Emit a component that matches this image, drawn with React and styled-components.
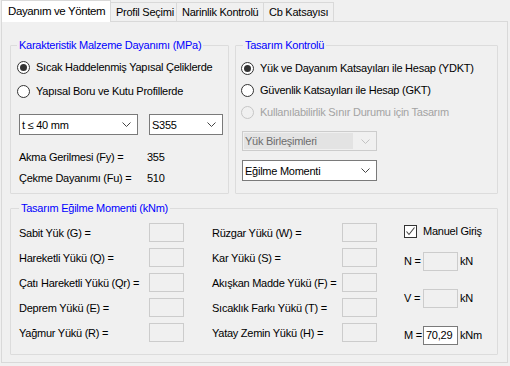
import React from 'react';
import styled, { createGlobalStyle } from 'styled-components';

const GlobalStyle = createGlobalStyle`
  html, body {
    margin: 0;
    padding: 0;
    background: #f0f0f0;
  }
  body {
    font-family: "Liberation Sans", Arial, sans-serif;
    font-size: 11px;
    letter-spacing: -0.25px;
    color: #000;
  }
`;

const Window = styled.div`
  width: 510px;
  height: 366px;
  display: flex;
  flex-direction: column;
  overflow: hidden;
  background: #f0f0f0;
`;

const TabStrip = styled.div`
  display: flex;
  align-items: flex-end;
  height: 22px;
  margin-bottom: -1px;
  padding-left: 1px;
  position: relative;
  z-index: 1;
`;

const Tab = styled.div`
  box-sizing: border-box;
  width: ${p => p.$width}px;
  height: ${p => (p.$active ? 22 : 20)}px;
  margin-left: ${p => (p.$first ? 0 : -1)}px;
  border: 1px solid #d9d9d9;
  border-bottom: ${p => (p.$active ? 'none' : '1px solid #d9d9d9')};
  background: ${p => (p.$active ? '#ffffff' : '#f0f0f0')};
  display: flex;
  align-items: center;
  padding-left: ${p => (p.$active ? 6 : 5)}px;
  padding-bottom: ${p => (p.$active ? 1 : 0)}px;
  font-size: ${p => (p.$active ? 11.5 : 11)}px;
  letter-spacing: ${p => (p.$active ? -0.4 : -0.25)}px;
  white-space: nowrap;
  position: relative;
  z-index: ${p => (p.$active ? 2 : 0)};
`;

const Panel = styled.div`
  box-sizing: border-box;
  width: 507px;
  height: 342px;
  margin-left: 1px;
  border: 1px solid #d9d9d9;
  background: #f0f0f0;
  padding: 16px 0 0 8px;
  display: grid;
  grid-template-columns: 219px 263px;
  grid-template-rows: 156px 154px;
  column-gap: 6px;
  row-gap: 7px;
`;

const Group = styled.fieldset`
  box-sizing: border-box;
  margin: 0;
  min-width: 0;
  border: 1px solid #dcdcdc;
  border-radius: 1px;
  padding: ${p => p.$pad};
  grid-column: ${p => p.$span || 'auto'};
  display: flex;
  flex-direction: ${p => p.$dir || 'column'};
`;

const Legend = styled.legend`
  color: #0000ff;
  font-size: 11px;
  line-height: 14px;
  padding: 0 2px;
  margin-left: ${p => p.$offset || 0}px;
`;

const RadioRow = styled.label`
  display: flex;
  align-items: center;
  gap: 6px;
  height: ${p => p.$h}px;
  color: ${p => (p.$disabled ? '#a3a3a3' : '#000')};
  white-space: nowrap;
`;

const RadioDot = styled.span`
  box-sizing: border-box;
  width: 13px;
  height: 13px;
  border-radius: 50%;
  border: 1px solid ${p => (p.$disabled ? '#c6c6c6' : '#333')};
  background: ${p => (p.$disabled ? '#f0f0f0' : '#fff')};
  display: flex;
  align-items: center;
  justify-content: center;
  flex: none;
  &::after {
    content: '';
    display: ${p => (p.$checked ? 'block' : 'none')};
    width: 7px;
    height: 7px;
    border-radius: 50%;
    background: #333;
  }
`;

const Radio = ({ checked, disabled, h, children }) => (
  <RadioRow $h={h} $disabled={disabled}>
    <RadioDot $checked={checked} $disabled={disabled} />
    {children}
  </RadioRow>
);

const ComboBox = styled.div`
  box-sizing: border-box;
  width: ${p => p.$w}px;
  height: ${p => p.$h}px;
  border: 1px solid ${p => (p.$disabled ? '#cccccc' : '#7a7a7a')};
  background: ${p => (p.$disabled ? '#f0f0f0' : '#fff')};
  display: flex;
  align-items: center;
  padding: 1px 6px 1px 1px;
  color: ${p => (p.$disabled ? '#6d6d6d' : '#000')};
  flex: none;
`;

const ComboText = styled.span`
  flex: 1;
  align-self: stretch;
  display: flex;
  align-items: center;
  padding-left: 1px;
  margin-right: 8px;
  background: ${p => (p.$disabled ? '#e3e3e3' : 'transparent')};
  white-space: nowrap;
`;

const Chevron = ({ color }) => (
  <svg width="9" height="5" viewBox="0 0 9 5">
    <polyline points="0.5,0.5 4.5,4.5 8.5,0.5" fill="none" stroke={color} strokeWidth="1" />
  </svg>
);

const Combo = ({ w, h, disabled, children }) => (
  <ComboBox $w={w} $h={h} $disabled={disabled}>
    <ComboText $disabled={disabled}>{children}</ComboText>
    <Chevron color={disabled ? '#c2c2c2' : '#444'} />
  </ComboBox>
);

const ComboRow = styled.div`
  display: flex;
  gap: ${p => p.$gap || 0}px;
  margin-top: ${p => p.$mt}px;
  margin-left: ${p => p.$ml || 0}px;
`;

const ValueRow = styled.div`
  display: flex;
  align-items: center;
  height: 21px;
  margin-left: 2px;
  margin-top: ${p => p.$mt || 0}px;
`;

const ValueLabel = styled.span`
  width: 128px;
  white-space: nowrap;
`;

const Column = styled.div`
  display: flex;
  flex-direction: column;
  margin-right: ${p => p.$mr || 0}px;
`;

const LoadRow = styled.div`
  display: flex;
  align-items: center;
  height: 25px;
`;

const LoadLabel = styled.span`
  width: 130px;
  white-space: nowrap;
`;

const TextBox = styled.div`
  box-sizing: border-box;
  width: 35px;
  height: ${p => p.$h || 19}px;
  border: 1px solid ${p => (p.$active ? '#7a7a7a' : '#cccccc')};
  background: ${p => (p.$active ? '#fff' : '#f0f0f0')};
  display: flex;
  align-items: center;
  padding-left: 2px;
  flex: none;
`;

const CheckRow = styled.label`
  display: flex;
  align-items: center;
  gap: 6px;
  height: 22px;
`;

const CheckBox = styled.span`
  box-sizing: border-box;
  width: 13px;
  height: 13px;
  border: 1px solid #333;
  background: #fff;
  display: flex;
  align-items: center;
  justify-content: center;
  flex: none;
`;

const ForceRow = styled.div`
  display: flex;
  align-items: center;
  height: 20px;
  margin-top: ${p => p.$mt}px;
`;

const ForceLabel = styled.span`
  width: 19px;
  white-space: nowrap;
`;

const Unit = styled.span`
  margin-left: 2px;
`;

const loadsLeft = [
  'Sabit Yük (G) =',
  'Hareketli Yükü (Q) =',
  'Çatı Hareketli Yükü (Qr) =',
  'Deprem Yükü (E) =',
  'Yağmur Yükü (R) =',
];

const loadsRight = [
  'Rüzgar Yükü (W) =',
  'Kar Yükü (S) =',
  'Akışkan Madde Yükü (F) =',
  'Sıcaklık Farkı Yükü (T) =',
  'Yatay Zemin Yükü (H) =',
];

const tabs = [
  { name: 'Dayanım ve Yöntem', width: 110 },
  { name: 'Profil Seçimi', width: 67 },
  { name: 'Narinlik Kontrolü', width: 88 },
  { name: 'Cb Katsayısı', width: 71 },
];

export default function App() {
  return (
    <Window>
      <GlobalStyle />
      <TabStrip>
        {tabs.map((t, i) => (
          <Tab key={t.name} $width={t.width} $active={i === 0} $first={i === 0}>
            {t.name}
          </Tab>
        ))}
      </TabStrip>
      <Panel>
        <Group $pad="3px 6px 0 6px">
          <Legend>Karakteristik Malzeme Dayanımı (MPa)</Legend>
          <Radio h={24} checked>Sıcak Haddelenmiş Yapısal Çeliklerde</Radio>
          <Radio h={24}>Yapısal Boru ve Kutu Profillerde</Radio>
          <ComboRow $mt={11} $ml={2} $gap={11}>
            <Combo w={119} h={21}>t ≤ 40 mm</Combo>
            <Combo w={74} h={21}>S355</Combo>
          </ComboRow>
          <ValueRow $mt={11}>
            <ValueLabel>Akma Gerilmesi (Fy) =</ValueLabel>
            <span>355</span>
          </ValueRow>
          <ValueRow>
            <ValueLabel>Çekme Dayanımı (Fu) =</ValueLabel>
            <span>510</span>
          </ValueRow>
        </Group>

        <Group $pad="5px 5px 0 5px">
          <Legend $offset={2}>Tasarım Kontrolü</Legend>
          <Radio h={22} checked>Yük ve Dayanım Katsayıları ile Hesap (YDKT)</Radio>
          <Radio h={22}>Güvenlik Katsayıları ile Hesap (GKT)</Radio>
          <Radio h={22} disabled>Kullanılabilirlik Sınır Durumu için Tasarım</Radio>
          <ComboRow $mt={8} $ml={1}>
            <Combo w={135} h={20} disabled>Yük Birleşimleri</Combo>
          </ComboRow>
          <ComboRow $mt={9} $ml={1}>
            <Combo w={135} h={21}>Eğilme Momenti</Combo>
          </ComboRow>
        </Group>

        <Group $span="1 / span 2" $dir="row" $pad="5px 8px 0 8px">
          <Legend>Tasarım Eğilme Momenti (kNm)</Legend>
          <Column $mr={28}>
            {loadsLeft.map(l => (
              <LoadRow key={l}>
                <LoadLabel>{l}</LoadLabel>
                <TextBox />
              </LoadRow>
            ))}
          </Column>
          <Column $mr={27}>
            {loadsRight.map(l => (
              <LoadRow key={l}>
                <LoadLabel>{l}</LoadLabel>
                <TextBox />
              </LoadRow>
            ))}
          </Column>
          <Column>
            <CheckRow>
              <CheckBox>
                <svg width="11" height="11" viewBox="0 0 11 11">
                  <polyline points="1.5,5.5 4,8.5 9.5,1.5" fill="none" stroke="#444" strokeWidth="1.1" />
                </svg>
              </CheckBox>
              Manuel Giriş
            </CheckRow>
            <ForceRow $mt={9}>
              <ForceLabel>N =</ForceLabel>
              <TextBox />
              <Unit>kN</Unit>
            </ForceRow>
            <ForceRow $mt={17}>
              <ForceLabel>V =</ForceLabel>
              <TextBox />
              <Unit>kN</Unit>
            </ForceRow>
            <ForceRow $mt={17}>
              <ForceLabel>M =</ForceLabel>
              <TextBox $active>70,29</TextBox>
              <Unit>kNm</Unit>
            </ForceRow>
          </Column>
        </Group>
      </Panel>
    </Window>
  );
}
